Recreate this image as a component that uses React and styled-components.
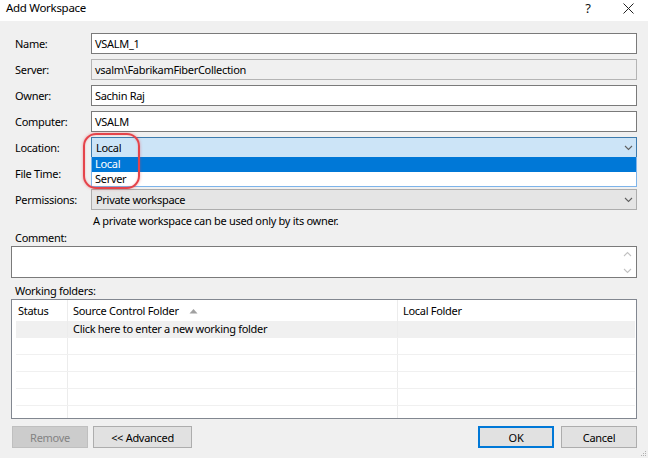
import React from "react";
import styled, { createGlobalStyle, css } from "styled-components";

const GlobalStyle = createGlobalStyle`
  html, body {
    margin: 0;
    padding: 0;
    background: #f0f0f0;
  }
  * {
    box-sizing: border-box;
  }
`;

const Window = styled.div`
  width: 648px;
  height: 458px;
  background: #f0f0f0;
  font-family: "Noto Sans", "Open Sans", sans-serif;
  font-size: 11px;
  letter-spacing: -0.3px;
  color: #000;
  position: relative;
  overflow: hidden;
  display: flex;
  flex-direction: column;
`;

const TitleBar = styled.div`
  height: 21px;
  background: #fff;
  display: flex;
  align-items: flex-start;
  padding: 0 0 0 6px;
  line-height: 16px;
  font-size: 11.5px;
`;

const Title = styled.div`
  flex: 1;
`;

const TitleButton = styled.div`
  width: 40px;
  height: 16px;
  display: flex;
  align-items: center;
  justify-content: center;
  font-size: 13px;
  color: #111;
`;

const Body = styled.div`
  padding: 12px 11px 0 11px;
  display: flex;
  flex-direction: column;
  position: relative;
`;

const FormGrid = styled.div`
  display: grid;
  grid-template-columns: 76px 1fr;
  grid-auto-rows: 21px;
  row-gap: 5px;
  padding-left: 4px;
`;

const Label = styled.div`
  display: flex;
  align-items: center;
  line-height: 14px;
`;

const Field = styled.div`
  position: relative;
  border: 1px solid ${(p) => (p.$readonly ? "#b4b4b4" : "#7a7a7a")};
  background: ${(p) => (p.$readonly ? "#f0f0f0" : "#fff")};
  display: flex;
  align-items: center;
  padding: 0 3px;
  white-space: nowrap;
`;

const Combo = styled.div`
  position: relative;
  display: flex;
  align-items: center;
  justify-content: space-between;
  padding: 0 3px 0 4px;
  ${(p) =>
    p.$open
      ? css`
          background: #cce4f7;
          border: 1px solid #3d7bad;
        `
      : css`
          background: #e5e5e5;
          border: 1px solid #adadad;
        `}
`;

const DropList = styled.div`
  position: absolute;
  left: -1px;
  right: -1px;
  top: 19px;
  z-index: 2;
  background: #fff;
  border: 1px solid #7eb4ea;
  border-top: none;
  display: flex;
  flex-direction: column;
`;

const DropItem = styled.div`
  height: ${(p) => (p.$first ? "15px" : "14px")};
  line-height: 14px;
  padding-left: 3px;
  background: ${(p) => (p.$selected ? "#0078d7" : "#fff")};
  color: ${(p) => (p.$selected ? "#fff" : "#000")};
`;

const Hint = styled.div`
  margin-top: 4px;
  padding-left: 82px;
  line-height: 14px;
  height: 14px;
`;

const SectionLabel = styled.div`
  margin-top: ${(p) => p.$top}px;
  padding-left: 4px;
  line-height: 14px;
  height: 14px;
`;

const TextArea = styled.div`
  margin-top: 1px;
  height: 32px;
  border: 1px solid #7a7a7a;
  background: #fff;
  display: flex;
  justify-content: flex-end;
`;

const ScrollTrack = styled.div`
  width: 17px;
  display: flex;
  flex-direction: column;
  justify-content: space-between;
  align-items: center;
  padding: 4px 0 3px;
`;

const Grid = styled.div`
  margin-top: 1px;
  height: 120px;
  border: 1px solid #828790;
  background: #fff;
  overflow: hidden;
  padding: 0 1px;
`;

const Row = styled.div`
  display: grid;
  grid-template-columns: ${(p) => (p.$header ? "54px" : "51px")} 330px 1fr;
  height: ${(p) => (p.$header ? "21px" : "17px")};
  margin-left: ${(p) => (p.$header ? "0" : "3px")};
  background: ${(p) => (p.$shaded ? "#f0f0f0" : "#fff")};
  border-bottom: ${(p) => (p.$header ? "none" : "1px solid #f0f0f0")};
`;

const Cell = styled.div`
  display: flex;
  align-items: center;
  gap: 10px;
  padding-left: 5px;
  border-left: ${(p) => (p.$first ? "none" : "1px solid #ececec")};
  white-space: nowrap;
  line-height: 14px;
`;

const ButtonBar = styled.div`
  margin-top: 7px;
  display: flex;
  align-items: center;
  gap: 5px;
  padding-left: 1px;
`;

const Spacer = styled.div`
  flex: 1;
`;

const Button = styled.div`
  height: 22px;
  width: ${(p) => p.$w}px;
  margin-left: ${(p) => p.$ml || 0}px;
  display: flex;
  align-items: center;
  justify-content: center;
  background: ${(p) => (p.$disabled ? "#cccccc" : "#e1e1e1")};
  color: ${(p) => (p.$disabled ? "#838383" : "#000")};
  border: ${(p) =>
    p.$default ? "2px solid #0078d7" : p.$disabled ? "1px solid #bfbfbf" : "1px solid #adadad"};
`;

const Callout = styled.div`
  position: absolute;
  left: 83px;
  top: 112px;
  width: 57px;
  height: 56px;
  border: 2.5px solid #e5434a;
  border-radius: 13px;
  box-shadow: 0 0 3px rgba(229, 67, 74, 0.5), inset 0 0 2px rgba(229, 67, 74, 0.4);
  z-index: 3;
  pointer-events: none;
`;

const Grip = styled.svg`
  position: absolute;
  right: 1px;
  bottom: 1px;
`;

function Chevron({ color = "#606060", up = false }) {
  return (
    <svg width="9" height="6" viewBox="0 0 9 6">
      <path
        d={up ? "M1 5 L4.5 1.5 L8 5" : "M1 1 L4.5 4.5 L8 1"}
        fill="none"
        stroke={color}
        strokeWidth="1.1"
      />
    </svg>
  );
}

const emptyRows = [0, 1, 2, 3, 4];

function App() {
  return (
    <Window>
      <GlobalStyle />
      <TitleBar>
        <Title>Add Workspace</Title>
        <TitleButton>?</TitleButton>
        <TitleButton>
          <svg width="11" height="11" viewBox="0 0 11 11">
            <path d="M0.5 0.5 L10.5 10.5 M10.5 0.5 L0.5 10.5" stroke="#222" strokeWidth="1" />
          </svg>
        </TitleButton>
      </TitleBar>

      <Body>
        <FormGrid>
          <Label>Name:</Label>
          <Field>VSALM_1</Field>
          <Label>Server:</Label>
          <Field $readonly>vsalm\FabrikamFiberCollection</Field>
          <Label>Owner:</Label>
          <Field>Sachin Raj</Field>
          <Label>Computer:</Label>
          <Field>VSALM</Field>
          <Label>Location:</Label>
          <Combo $open>
            <span>Local</span>
            <Chevron />
            <DropList>
              <DropItem $selected $first>
                Local
              </DropItem>
              <DropItem>Server</DropItem>
            </DropList>
          </Combo>
          <Label>File Time:</Label>
          <Field />
          <Label>Permissions:</Label>
          <Combo>
            <span>Private workspace</span>
            <Chevron />
          </Combo>
        </FormGrid>

        <Hint>A private workspace can be used only by its owner.</Hint>

        <SectionLabel $top={3}>Comment:</SectionLabel>
        <TextArea>
          <ScrollTrack>
            <Chevron color="#c2c2c2" up />
            <Chevron color="#c2c2c2" />
          </ScrollTrack>
        </TextArea>

        <SectionLabel $top={6}>Working folders:</SectionLabel>
        <Grid>
          <Row $header>
            <Cell $first>Status</Cell>
            <Cell>
              Source Control Folder
              <svg width="9" height="6" viewBox="0 0 9 6">
                <path d="M0.5 5.5 L4.5 1 L8.5 5.5 Z" fill="#a0a0a0" />
              </svg>
            </Cell>
            <Cell>Local Folder</Cell>
          </Row>
          <Row $shaded>
            <Cell $first />
            <Cell>Click here to enter a new working folder</Cell>
            <Cell />
          </Row>
          {emptyRows.map((r) => (
            <Row key={r}>
              <Cell $first />
              <Cell />
              <Cell />
            </Row>
          ))}
        </Grid>

        <ButtonBar>
          <Button $w={76} $disabled>
            Remove
          </Button>
          <Button $w={99}>&lt;&lt; Advanced</Button>
          <Spacer />
          <Button $w={76} $default>
            OK
          </Button>
          <Button $w={76} $ml={2}>
            Cancel
          </Button>
        </ButtonBar>

        <Callout />
      </Body>

      <Grip width="7" height="7" viewBox="0 0 7 7">
        <rect x="5" y="1" width="1" height="1" fill="#b0b0b0" />
        <rect x="3" y="3" width="1" height="1" fill="#b0b0b0" />
        <rect x="5" y="3" width="1" height="1" fill="#b0b0b0" />
        <rect x="1" y="5" width="1" height="1" fill="#b0b0b0" />
        <rect x="3" y="5" width="1" height="1" fill="#b0b0b0" />
        <rect x="5" y="5" width="1" height="1" fill="#b0b0b0" />
      </Grip>
    </Window>
  );
}

export default App;
